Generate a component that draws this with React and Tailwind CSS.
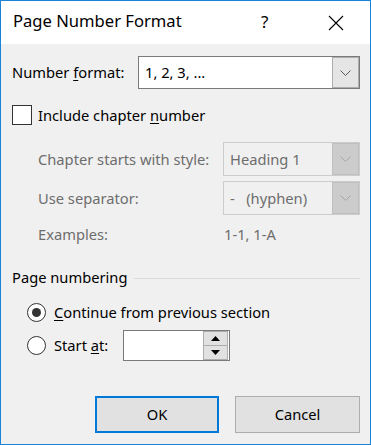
import React from "react";

const Chevron = ({ color }) => (
  <svg width="11" height="6" viewBox="0 0 11 6" fill="none">
    <path d="M0.5 0.5 L5.5 5.5 L10.5 0.5" stroke={color} strokeWidth="1" />
  </svg>
);

const Combo = ({ value, disabled, className }) => (
  <div
    className={
      "flex border " +
      (disabled ? "border-[#cccccc] bg-[#f0f0f0] text-[#6d6d6d]" : "border-[#7a7a7a] bg-white text-black") +
      " " +
      className
    }
  >
    <div className="flex-1 flex items-center pl-[6px] whitespace-pre">{value}</div>
    <div
      className={
        "w-[27px] flex items-center justify-center border " +
        (disabled ? "bg-[#cccccc] border-[#bfbfbf]" : "bg-[#e5e5e5] border-[#adadad]")
      }
    >
      <Chevron color={disabled ? "#a6a6a6" : "#5a5a5a"} />
    </div>
  </div>
);

const Radio = ({ checked }) => (
  <div className="w-[19px] h-[19px] rounded-full border border-[#333333] bg-white flex items-center justify-center">
    {checked && <div className="w-[9px] h-[9px] rounded-full bg-[#333333]" />}
  </div>
);

export default function App() {
  return (
    <div
      className="w-[371px] h-[445px] border border-[#1883d7] flex flex-col text-[14.7px] text-black"
      style={{ fontFamily: '"Noto Sans", "Open Sans", sans-serif' }}
    >
      {/* Title bar */}
      <div className="h-[43px] bg-white flex items-center pl-[12px] shrink-0">
        <div className="flex-1 text-[16.6px] leading-none pb-[2px]">Page Number Format</div>
        <div className="w-[14px] text-[17px] leading-none mr-[53px] pb-[2px]">?</div>
        <svg width="16" height="16" viewBox="0 0 16 16" className="mr-[26px]">
          <path d="M1 1 L15 15 M15 1 L1 15" stroke="#000" strokeWidth="1.1" />
        </svg>
      </div>

      {/* Body */}
      <div className="flex-1 bg-[#f0f0f0] flex flex-col pl-[11px] pr-[10px]">
        <div className="flex items-center mt-[12px] h-[33px]">
          <div className="w-[126px]">
            Number <span className="underline underline-offset-2">f</span>ormat:
          </div>
          <Combo value="1, 2, 3, ..." className="flex-1 h-[33px]" />
        </div>

        <div className="flex items-center mt-[16px] h-[20px]">
          <div className="w-[20px] h-[20px] border border-[#333333] bg-white" />
          <div className="ml-[6px]">
            Include chapter <span className="underline underline-offset-2">n</span>umber
          </div>
        </div>

        <div className="flex items-center mt-[17px] h-[34px] pl-[26px] text-[#6d6d6d]">
          <div className="w-[185px]">Chapter starts with style:</div>
          <Combo value="Heading 1" disabled className="flex-1 h-[34px]" />
        </div>
        <div className="flex items-center mt-[5px] h-[34px] pl-[26px] text-[#6d6d6d]">
          <div className="w-[185px]">Use separator:</div>
          <Combo value={"-   (hyphen)"} disabled className="flex-1 h-[34px]" />
        </div>
        <div className="flex items-center mt-[5px] h-[28px] pl-[26px] text-[#6d6d6d]">
          <div className="w-[185px]">Examples:</div>
          <div className="pl-[1px]">1-1, 1-A</div>
        </div>

        <div className="flex items-center mt-[19px] h-[20px]">
          <div>Page numbering</div>
          <div className="flex-1 h-px bg-[#dcdcdc] ml-[7px] mt-[2px]" />
        </div>

        <div className="flex items-center mt-[14px] h-[22px] pl-[15px]">
          <Radio checked />
          <div className="ml-[8px]">
            <span className="underline underline-offset-2">C</span>ontinue from previous section
          </div>
        </div>

        <div className="flex items-center mt-[7px] h-[31px] pl-[15px]">
          <Radio />
          <div className="ml-[8px] w-[69px]">
            Start <span className="underline underline-offset-2">a</span>t:
          </div>
          <div className="w-[107px] h-[31px] border border-[#7a7a7a] bg-white flex justify-end items-center pr-[1px]">
            <div className="w-[25px] h-[29px] flex flex-col">
              <div className="flex-1 bg-[#e1e1e1] border border-[#adadad] flex items-center justify-center">
                <svg width="9" height="5" viewBox="0 0 9 5">
                  <path d="M0 5 L4.5 0 L9 5 Z" fill="#000" />
                </svg>
              </div>
              <div className="flex-1 bg-[#e1e1e1] border border-t-0 border-[#adadad] flex items-center justify-center">
                <svg width="9" height="5" viewBox="0 0 9 5">
                  <path d="M0 0 L9 0 L4.5 5 Z" fill="#000" />
                </svg>
              </div>
            </div>
          </div>
        </div>

        <div className="flex justify-end gap-[16px] mt-[35px]">
          <div className="w-[124px] h-[37px] bg-[#e1e1e1] border-2 border-[#0078d7] flex items-center justify-center">
            OK
          </div>
          <div className="w-[125px] h-[37px] bg-[#e1e1e1] border border-[#adadad] flex items-center justify-center">
            Cancel
          </div>
        </div>
      </div>
    </div>
  );
}
